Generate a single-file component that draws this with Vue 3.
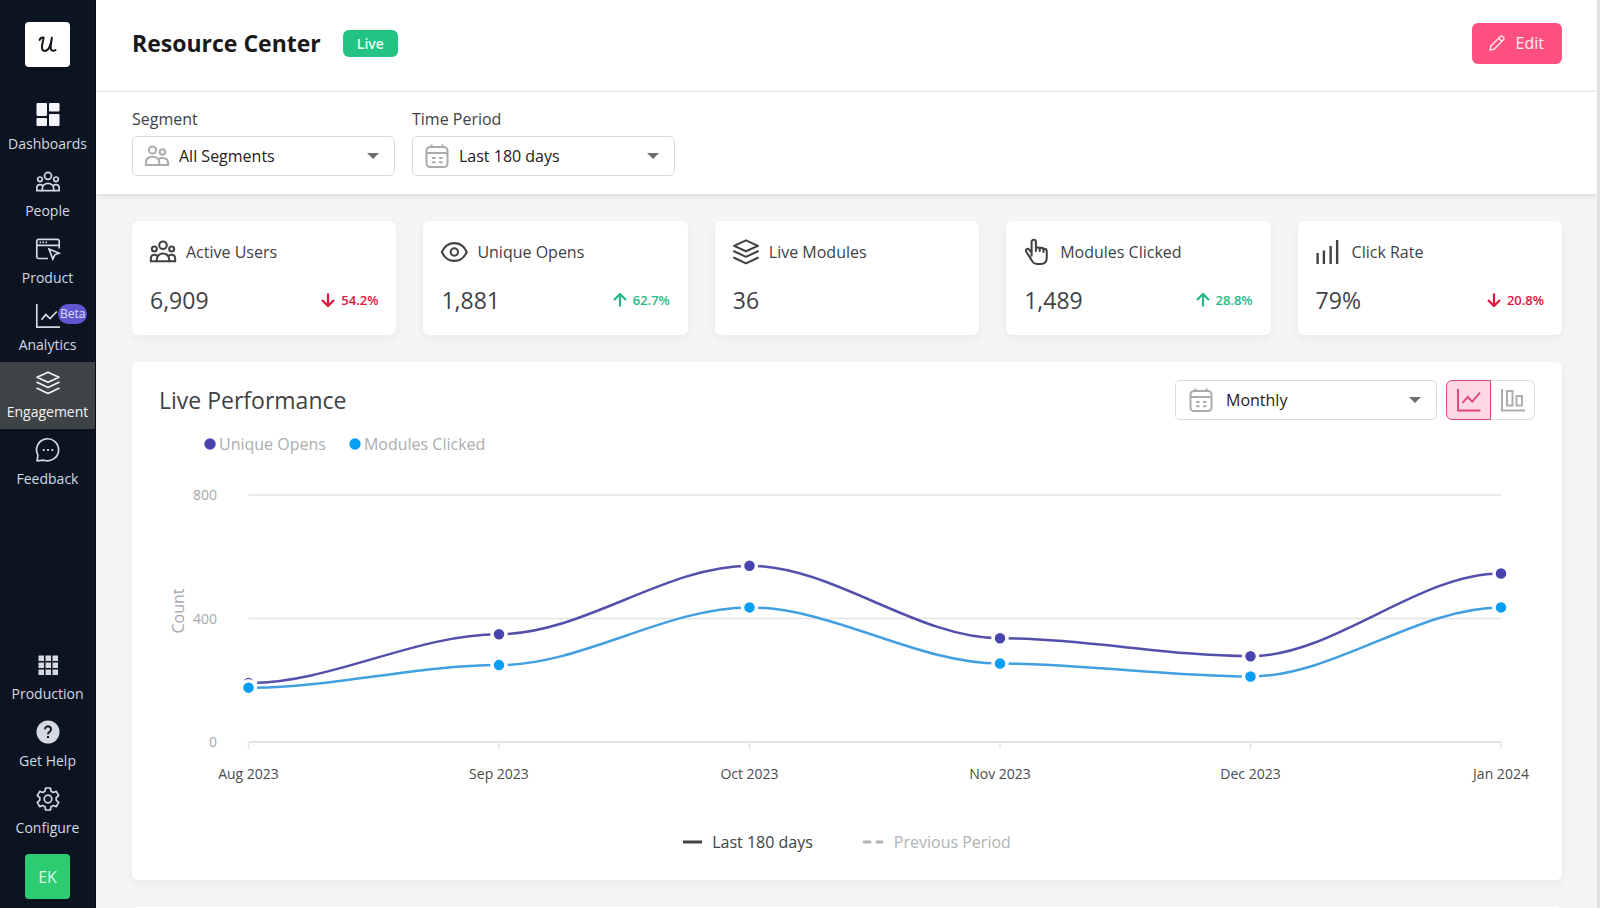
<script setup>
import { ref } from 'vue'

const topNav = [
  { id: 'dashboards', label: 'Dashboards' },
  { id: 'people', label: 'People' },
  { id: 'product', label: 'Product' },
  { id: 'analytics', label: 'Analytics', badge: 'Beta' },
  { id: 'engagement', label: 'Engagement', active: true },
  { id: 'feedback', label: 'Feedback' },
]
const bottomNav = [
  { id: 'production', label: 'Production' },
  { id: 'help', label: 'Get Help' },
  { id: 'configure', label: 'Configure' },
]

const stats = [
  { id: 'people', title: 'Active Users', value: '6,909', change: '54.2%', dir: 'down' },
  { id: 'eye', title: 'Unique Opens', value: '1,881', change: '62.7%', dir: 'up' },
  { id: 'engagement', title: 'Live Modules', value: '36' },
  { id: 'hand', title: 'Modules Clicked', value: '1,489', change: '28.8%', dir: 'up' },
  { id: 'bars', title: 'Click Rate', value: '79%', change: '20.8%', dir: 'down' },
]

/* Each icon is drawn on a 24 x 24 grid. */
const icons = {
  dashboards:
    '<g fill="currentColor" stroke="none"><rect x="0.5" y="0" width="10.5" height="13" rx="1"/><rect x="13" y="0" width="10.5" height="8.5" rx="1"/><rect x="0.5" y="15" width="10.5" height="8" rx="1"/><rect x="13" y="11" width="10.5" height="12" rx="1"/></g>',
  people:
    '<circle cx="12" cy="5.800" r="3.500"/><circle cx="4" cy="9.300" r="2.300"/><circle cx="20" cy="9.300" r="2.300"/><path d="M6.300 20.600v-2.200a5.700 5 0 0 1 11.400 0v2.200z"/><path d="M6.300 20.600H.8v-2.500c0-2.200 1.300-3.500 3.200-3.500 1.200 0 2 .3 2.800 1M17.700 20.600h5.500v-2.500c0-2.200-1.300-3.500-3.200-3.500-1.200 0-2 .3-2.800 1"/>',
  product:
    '<path d="M12 21.500H2.500A1.700 1.700 0 0 1 .8 19.800V4A1.700 1.700 0 0 1 2.500 2.300h19A1.700 1.700 0 0 1 23.200 4v7.500M.8 8.300h22.400"/><path d="M13 12l10 4.200-4.200 1.600-2 4.200z"/><path d="M3.600 5.400h1.500M6.500 5.400H8M9.500 5.400H11" stroke-width="1.700"/>',
  analytics: '<path d="M.8 0v23.200H24M5.500 15.800l4.200-5.200 4.400 4L20.800 7.500"/>',
  engagement:
    '<path d="M12 1.300l11 5-11 5-11-5zM1 11.300l11 5.200 11-5.200M1 17.300l11 5.200 11-5.200" stroke-linejoin="round" stroke-linecap="round"/>',
  feedback:
    '<path d="M1 22.800l1-5.600A11 11 0 1 1 8 22.200z" stroke-linejoin="round"/><path d="M6.800 12h1.800M11.100 12h1.800M15.400 12h1.800" stroke-width="1.800"/>',
  production:
    '<g fill="currentColor" stroke="none"><path d="M2.500 2.500H8V8H2.500zM9.500 2.500H15V8H9.500zM16.500 2.500H22V8h-5.500zM2.500 9.500H8V15H2.500zM9.500 9.500H15V15H9.500zM16.500 9.500H22V15h-5.500zM2.500 16.500H8V22H2.500zM9.500 16.500H15V22H9.500zM16.500 16.500H22V22h-5.500z"/></g>',
  help:
    '<circle cx="12" cy="12" r="11.500" fill="currentColor" stroke="none"/><path d="M9 9.300a3 3 0 1 1 4.700 2.500c-1.200.8-1.700 1.200-1.700 2.500M12 16v2" stroke="#0c1421" stroke-width="2"/>',
  configure:
    '<circle cx="12" cy="12" r="3.800"/><path stroke-linejoin="round" d="M9.600 1h4.800l.6 3.200 2.200 1.300 3.100-1.100 2.400 4.200-2.500 2.100v2.600l2.500 2.100-2.400 4.200-3.100-1.100-2.200 1.300-.6 3.200H9.600L9 19.800l-2.200-1.300-3.100 1.100-2.400-4.200 2.500-2.100v-2.600L1.300 8.600l2.400-4.200 3.100 1.100L9 4.200z"/>',
  eye:
    '<path d="M.8 12C3.300 6.300 7.500 3.800 12.300 3.800S21.300 6.300 23.800 12C21.300 17.700 17.100 20.200 12.300 20.200S3.300 17.700 .8 12z" stroke-linejoin="round"/><circle cx="12.300" cy="12" r="3.400"/>',
  hand:
    '<path stroke-linejoin="round" stroke-linecap="round" d="M7 15.500V2.700a2 2 0 0 1 4 0V11M11 7.800h1.500c1.200 0 2 .8 2 2V11M14.500 8.200H16c1.200 0 2 .8 2 2V12M18 9h.8c1.400 0 2.200 1 2.200 2.200V17c0 3.800-2.200 6-5.500 6H12c-2.500 0-3.800-1.200-5-3.500l-5-8c-.8-1.500 1-3.200 2.500-2L7 12.500"/>',
  bars: '<path stroke-width="2.200" d="M1.500 13v10M7.300 10.500V23M13.500 6.500V23M19.500 1v22"/>',
  segment:
    '<circle cx="7.500" cy="6" r="3.600"/><circle cx="17.500" cy="8" r="2.800"/><path d="M.9 21v-2.200C.9 15 3.500 12.800 7.500 12.800s6.800 2.200 6.800 6V21zM14.300 21h8.800v-2c0-3.300-2.200-5-5.600-5-1.700 0-3 .4-4 1.200"/>',
  calendar:
    '<rect x="1.500" y="3" width="21" height="20" rx="3.500"/><path d="M1.500 9h21M6.500 .5V4M17.500 .5V4M7 14h3.600M14 14h3.600M7 18.300h3.600M14 18.300h3.600"/>',
  line: '<path d="M1 1v21.500h22.500M5.500 15l5.200-6 4.500 4.700L23 4.500"/>',
  columns: '<path d="M1 1v21.500h23"/><rect x="6" y="3" width="5.500" height="14.500"/><rect x="15.500" y="8" width="5.500" height="9.500"/>',
}

const mode = ref('line')

/* Chart geometry, in view-box units */
const left = 116.5
const step = 250.5
const base = 258
const months = ['Aug 2023', 'Sep 2023', 'Oct 2023', 'Nov 2023', 'Dec 2023', 'Jan 2024']
const xAt = (i) => left + i * step
const yAt = (v) => base - (v * 247) / 800
const series = [
  { name: 'Unique Opens', color: '#4844ad', stroke: '#534fab', data: [191, 349, 571, 336, 278, 546] },
  { name: 'Modules Clicked', color: '#069ef5', stroke: '#429fe0', data: [176, 249, 436, 254, 212, 436] },
]
const curve = (data) =>
  data
    .map((v, i) => {
      if (i === 0) return `M${xAt(0)} ${yAt(v)}`
      const reach = step / 3
      return `C${xAt(i - 1) + reach} ${yAt(data[i - 1])} ${xAt(i) - reach} ${yAt(v)} ${xAt(i)} ${yAt(v)}`
    })
    .join('')
</script>

<template>
  <div class="app">
    <aside class="sidebar">
      <a href="#" class="logo" aria-label="Home">
        <svg viewBox="0 0 46 46" aria-hidden="true">
          <path d="M15 18.500c.5-2 2-2.800 4-2.600-.2 3-1.700 6.500-1.700 9.700 0 2.800 1.200 4 3 4 3.500 0 6-5.500 7.200-13.600-.7 4.500-1.300 8-1.300 10.500 0 2.600 2 3.600 5 2.200" />
        </svg>
      </a>
      <nav class="nav" aria-label="Main">
        <a v-for="n in topNav" :key="n.id" href="#" class="nav-item" :class="{ active: n.active, bright: n.id === 'dashboards' }">
          <svg class="icon" viewBox="0 0 24 24" aria-hidden="true" v-html="icons[n.id]"></svg>
          <span>{{ n.label }}</span>
          <span v-if="n.badge" class="beta">{{ n.badge }}</span>
        </a>
      </nav>
      <nav class="nav bottom" aria-label="Workspace">
        <a v-for="n in bottomNav" :key="n.id" href="#" class="nav-item">
          <svg class="icon" viewBox="0 0 24 24" aria-hidden="true" v-html="icons[n.id]"></svg>
          <span>{{ n.label }}</span>
        </a>
      </nav>
      <button type="button" class="avatar">EK</button>
    </aside>

    <main class="main">
      <header class="header">
        <h1>Resource Center</h1>
        <span class="live">Live</span>
        <button type="button" class="edit">
          <svg viewBox="0 0 16 16" aria-hidden="true">
            <path d="M1 15l.8-4L11.300 1.600a1.700 1.700 0 0 1 2.400 0l.7.7a1.700 1.700 0 0 1 0 2.400L5 14.200zM9.700 3.200l3.100 3.100" />
          </svg>
          Edit
        </button>
      </header>

      <section class="filters">
        <div class="field">
          <label for="segment">Segment</label>
          <div class="select">
            <svg class="icon" viewBox="0 0 24 24" aria-hidden="true" v-html="icons.segment"></svg>
            <select id="segment"><option>All Segments</option></select>
            <svg class="caret" viewBox="0 0 12 6" aria-hidden="true"><path d="M0 0h12L6 6z" /></svg>
          </div>
        </div>
        <div class="field">
          <label for="period">Time Period</label>
          <div class="select">
            <svg class="icon" viewBox="0 0 24 24" aria-hidden="true" v-html="icons.calendar"></svg>
            <select id="period"><option>Last 180 days</option></select>
            <svg class="caret" viewBox="0 0 12 6" aria-hidden="true"><path d="M0 0h12L6 6z" /></svg>
          </div>
        </div>
      </section>

      <div class="content">
        <section class="stats">
          <article v-for="s in stats" :key="s.title" class="card stat">
            <h2>
              <svg class="icon" viewBox="0 0 24 24" aria-hidden="true" v-html="icons[s.id]"></svg>
              {{ s.title }}
            </h2>
            <div class="figures">
              <span class="value">{{ s.value }}</span>
              <span v-if="s.change" class="change" :class="s.dir">
                <svg viewBox="0 0 14 14" aria-hidden="true">
                  <path v-if="s.dir === 'up'" d="M7 13.500V1M1 7l6-6 6 6" />
                  <path v-else d="M7 .5V13M1 7l6 6 6-6" />
                </svg>
                {{ s.change }}
              </span>
            </div>
          </article>
        </section>

        <section class="card chart-card">
          <div class="chart-head">
            <h2>Live Performance</h2>
            <div class="select interval">
              <svg class="icon" viewBox="0 0 24 24" aria-hidden="true" v-html="icons.calendar"></svg>
              <select aria-label="Interval"><option>Monthly</option></select>
              <svg class="caret" viewBox="0 0 12 6" aria-hidden="true"><path d="M0 0h12L6 6z" /></svg>
            </div>
            <div class="toggle">
              <button type="button" aria-label="Line chart" :class="{ on: mode === 'line' }" @click="mode = 'line'">
                <svg class="icon" viewBox="0 0 24 24" aria-hidden="true" v-html="icons.line"></svg>
              </button>
              <button type="button" aria-label="Column chart" :class="{ on: mode === 'columns' }" @click="mode = 'columns'">
                <svg class="icon" viewBox="0 0 24 24" aria-hidden="true" v-html="icons.columns"></svg>
              </button>
            </div>
          </div>

          <ul class="legend">
            <li v-for="s in series" :key="s.name">
              <svg viewBox="0 0 12 12" aria-hidden="true"><circle cx="6" cy="6" r="5.700" :fill="s.color" /></svg>{{ s.name }}
            </li>
          </ul>

          <svg class="chart" viewBox="0 0 1430 316" role="img" aria-label="Live performance by month">
            <g class="grid">
              <path v-for="v in [400, 800]" :key="v" :d="`M${left} ${yAt(v)}H${xAt(5)}`" />
              <path class="axis" :d="`M${left} ${base}H${xAt(5)}`" />
              <path v-for="(m, i) in months" :key="m" :d="`M${xAt(i)} ${base}v7`" />
            </g>
            <g class="scale">
              <text v-for="v in [0, 400, 800]" :key="v" x="85" :y="yAt(v) + 5">{{ v }}</text>
            </g>
            <text class="count" transform="translate(52 127) rotate(-90)">Count</text>
            <g class="months">
              <text v-for="(m, i) in months" :key="m" :x="xAt(i)" :y="base + 37">{{ m }}</text>
            </g>
            <g v-for="s in series" :key="s.name">
              <path class="curve" :d="curve(s.data)" :stroke="s.stroke" />
              <circle v-for="(v, i) in s.data" :key="i" class="dot" :cx="xAt(i)" :cy="yAt(v)" r="7" :fill="s.color" />
            </g>
          </svg>

          <div class="periods">
            <span class="current">
              <svg class="solid" viewBox="0 0 19 4" aria-hidden="true"><path d="M0 2h19" /></svg>
              Last 180 days
            </span>
            <span class="previous">
              <svg class="dashed" viewBox="0 0 22 4" aria-hidden="true"><path d="M2 2h6M15 2h5" stroke-linecap="round" /></svg>
              Previous Period
            </span>
          </div>
        </section>

        <section class="card next-card"></section>
      </div>
    </main>
  </div>
</template>

<style>
body {
  background: #f5f5f7;
  overflow: hidden;
}
</style>

<style scoped>
.app {
  display: flex;
  height: 100vh;
  font-family: "Open Sans", "Noto Sans", sans-serif;
  font-size: 16px;
  color: #3f4144;
}
.app * {
  box-sizing: border-box;
}
button,
select {
  font-family: inherit;
  font-size: inherit;
  cursor: pointer;
}
h1,
h2,
ul {
  margin: 0;
  padding: 0;
}
svg {
  display: block;
  flex: none;
  fill: none;
  stroke: currentColor;
}
.icon {
  width: 24px;
  height: 24px;
  stroke-width: 1.7;
  overflow: visible;
}

/* Sidebar */
.sidebar {
  display: flex;
  flex-direction: column;
  align-items: center;
  flex: none;
  width: 96px;
  padding: 22px 0 9px;
  border-right: 1px solid #060a12;
  background: #0c1421;
}
.logo {
  width: 45px;
  height: 45px;
  margin-bottom: 27px;
  border-radius: 4px;
  background: #fff;
  color: #11131a;
}
.logo svg {
  stroke-width: 2;
  stroke-linecap: round;
  stroke-linejoin: round;
}
.nav {
  width: 100%;
}
.bottom {
  margin-top: auto;
  margin-bottom: 9px;
}
.nav-item {
  position: relative;
  display: flex;
  flex-direction: column;
  align-items: center;
  gap: 7px;
  height: 67px;
  padding-top: 9px;
  color: #d3d8e1;
  font-size: 14px;
  font-weight: 500;
  line-height: 20px;
  text-decoration: none;
}
.nav-item.bright .icon {
  color: #f4f6fb;
}
.nav-item.active {
  background: #3e4347;
  color: #f2f3f5;
}
.beta {
  position: absolute;
  top: 9px;
  left: 58px;
  padding: 0 2px;
  border-radius: 10px;
  background: #5e57d1;
  color: #dcdcfb;
  font-size: 12px;
  font-weight: 400;
}
.avatar {
  width: 45px;
  height: 45px;
  padding: 0;
  border: 0;
  border-radius: 4px;
  background: #2ecc71;
  color: #d8fbe4;
}

/* Header and filters */
.main {
  flex: 1;
  min-width: 0;
  border-right: 3px solid #e0e0e2;
  overflow: hidden;
}
.header {
  display: flex;
  align-items: center;
  height: 92px;
  padding: 0 35px 5px 36px;
  border-bottom: 1px solid #f0f0f1;
  background: #fff;
}
.header h1 {
  color: #18191b;
  font-size: 23px;
  font-weight: 700;
  line-height: 30px;
}
.live {
  margin-left: 22px;
  padding: 0 14px;
  border-radius: 6px;
  background: #23c481;
  color: #e9fff3;
  font-size: 14px;
  font-weight: 600;
  line-height: 27px;
}
.edit {
  display: flex;
  align-items: center;
  gap: 11px;
  height: 41px;
  margin-left: auto;
  padding: 0 18px 0 17px;
  border: 0;
  border-radius: 6px;
  background: #ff507f;
  color: #fff0f4;
  font-weight: 500;
}
.edit svg {
  width: 16px;
  height: 16px;
  stroke-width: 1.3;
  stroke-linejoin: round;
}
.filters {
  position: relative;
  display: flex;
  gap: 17px;
  padding: 15px 36px 18px;
  background: #fff;
  box-shadow: 0 1px 6px rgba(20, 20, 40, 0.14);
}
.field {
  width: 263px;
}
.field label {
  display: block;
  margin-bottom: 5px;
  font-weight: 500;
  line-height: 24px;
}
.select {
  display: grid;
  align-items: center;
  width: 100%;
  height: 40px;
}
.select > * {
  grid-area: 1 / 1;
}
.select select {
  width: 100%;
  height: 100%;
  padding: 0 40px 0 46px;
  border: 1px solid #d9dade;
  border-radius: 5px;
  background: #fff;
  color: #1f2023;
  appearance: none;
}
.select svg {
  z-index: 1;
  pointer-events: none;
}
.select .icon {
  margin-left: 13px;
  color: #a9abaf;
  stroke-width: 2;
}
.select.interval {
  width: 262px;
}
.select.interval select {
  padding-left: 50px;
}
.select.interval .icon {
  margin-left: 14px;
}
.caret {
  justify-self: end;
  width: 12px;
  height: 6px;
  margin-right: 16px;
  fill: #6c6e71;
  stroke: none;
}

/* Cards */
.content {
  display: flex;
  flex-direction: column;
  gap: 27px;
  padding: 27px 35px 0 36px;
}
.card {
  border-radius: 6px;
  background: #fff;
  box-shadow: 0 3px 8px rgba(30, 30, 60, 0.06);
}
.stats {
  display: grid;
  grid-template-columns: repeat(5, 1fr);
  gap: 27px;
}
.stat {
  padding: 18px 18px 19px;
}
.stat h2 {
  display: flex;
  align-items: center;
  gap: 10px;
  font-size: 16px;
  font-weight: 500;
  line-height: 26px;
}
.stat .icon {
  width: 26px;
  height: 26px;
  stroke-width: 1.9;
}
.figures {
  display: flex;
  align-items: center;
  justify-content: space-between;
  margin-top: 19px;
  line-height: 32px;
}
.value {
  font-size: 23px;
  font-weight: 500;
}
.change {
  display: flex;
  align-items: center;
  gap: 6px;
  font-size: 13px;
  font-weight: 600;
}
.change svg {
  width: 14px;
  height: 14px;
  stroke-width: 2.2;
}
.up {
  color: #27b985;
}
.down {
  color: #dd143c;
}

/* Chart */
.chart-card {
  padding: 18px 0 26px;
}
.chart-head {
  display: flex;
  align-items: center;
  padding: 0 27px;
}
.chart-head h2 {
  margin-right: auto;
  font-size: 23px;
  font-weight: 500;
  line-height: 40px;
}
.toggle {
  display: flex;
  margin-left: 9px;
}
.toggle button {
  display: grid;
  place-items: center;
  width: 44px;
  height: 40px;
  padding: 0;
  border: 1px solid #dcdde0;
  background: #fff;
  color: #a9abaf;
}
.toggle button:first-child {
  width: 45px;
  border-radius: 6px 0 0 6px;
}
.toggle button:last-child {
  border-left: 0;
  border-radius: 0 6px 6px 0;
}
.toggle .icon {
  stroke-width: 1.9;
}
.toggle .on {
  border-color: #dc4777;
  background: #ffd8e3;
  color: #dc4777;
}
.legend {
  display: flex;
  gap: 23px;
  padding: 12px 0 0 72px;
  color: #abadb0;
  line-height: 24px;
  list-style: none;
}
.legend li {
  display: flex;
  align-items: center;
  gap: 3px;
}
.legend svg {
  width: 12px;
  height: 12px;
  stroke: none;
}
.chart {
  width: 100%;
  height: auto;
  margin-top: 28px;
  overflow: visible;
}
.chart text {
  fill: #a6a8ab;
  stroke: none;
  font-size: 14px;
}
.scale text {
  text-anchor: end;
}
.chart .count {
  font-size: 16px;
  text-anchor: middle;
}
.chart .months text {
  fill: #4a4c50;
  text-anchor: middle;
}
.grid {
  stroke: #e2e3e4;
  stroke-width: 1.5;
}
.axis {
  stroke-width: 2;
}
.curve {
  stroke-width: 2.5;
}
.dot {
  stroke: #fff;
  stroke-width: 3.5;
}
.periods {
  display: flex;
  justify-content: center;
  gap: 49px;
  margin-top: 30px;
  font-weight: 500;
  line-height: 24px;
}
.periods span {
  display: flex;
  align-items: center;
  gap: 10px;
}
.periods svg {
  height: 4px;
  stroke-width: 3;
}
.solid {
  width: 19px;
}
.dashed {
  width: 22px;
}
.previous {
  color: #b1b3b5;
}
.next-card {
  height: 120px;
}
</style>
